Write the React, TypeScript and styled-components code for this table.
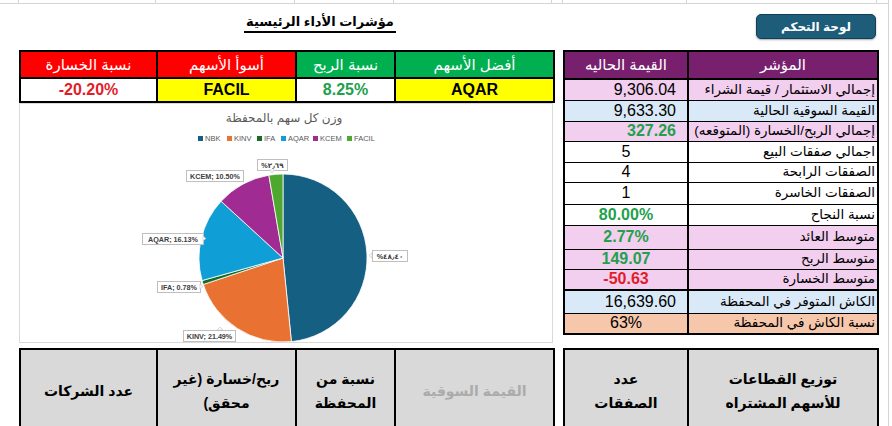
import React from "react";
import styled, { createGlobalStyle } from "styled-components";

const GlobalStyle = createGlobalStyle`
  html, body { margin: 0; padding: 0; background: #fff; }
  body { font-family: "Liberation Sans", "DejaVu Sans", Arial, sans-serif; color: #000; }
  *, *::before, *::after { box-sizing: border-box; }
`;

const Page = styled.div`
  width: 889px;
  height: 426px;
  overflow: hidden;
  border-right: 1px solid #d4d4d4;
`;

// faint spreadsheet grid lines along the top edge
const GridStrip = styled.div`
  display: grid;
  grid-template-columns: 19px 137px 139px 99px 158px 11px 124px 190px;
  height: 4px;
  border-bottom: 1px solid #d4d4d4;

  span {
    border-right: 1px solid #d4d4d4;
  }
`;

const Sheet = styled.div`
  display: grid;
  grid-template-columns: 534px 314px;
  grid-template-rows: 46px 298px 84px;
  column-gap: 10px;
  padding-left: 19px;
`;

const TitleArea = styled.div`
  display: flex;
  justify-content: center;
  align-items: flex-start;
  padding: 10px 0 0 68px;
`;

const Title = styled.h1`
  margin: 0;
  padding: 0 2px 1px;
  font-size: 13px;
  line-height: 16px;
  font-weight: bold;
  direction: rtl;
  border-bottom: 2px solid #000;
`;

const ButtonArea = styled.div`
  display: flex;
  justify-content: flex-end;
  align-items: flex-start;
  padding: 10px 1px 0 0;
`;

const DashButton = styled.button`
  width: 120px;
  height: 25px;
  padding: 0;
  background: #1d5d7a;
  border: 1px solid #123f55;
  border-radius: 5px;
  color: #fff;
  font: bold 12px "Liberation Sans", "DejaVu Sans", sans-serif;
  direction: rtl;
  box-shadow: 0 1px 2px rgba(0, 0, 0, 0.35);
`;

const LeftStack = styled.div`
  display: flex;
  flex-direction: column;
`;

const Table = styled.table<{ $w: number }>`
  width: ${p => p.$w}px;
  border-collapse: collapse;
  table-layout: fixed;
`;

const KpiHead = styled.th<{ $tone: "red" | "green" }>`
  height: 27px;
  padding: 0;
  border: 2px solid #000;
  background: ${p => (p.$tone === "red" ? "#ff0000" : "#00b050")};
  color: #fff;
  font-size: 15px;
  font-weight: normal;
  direction: rtl;
`;

const KpiValue = styled.td<{ $bg: string; $color: string }>`
  height: 24px;
  padding: 0;
  border: 2px solid #000;
  background: ${p => p.$bg};
  color: ${p => p.$color};
  text-align: center;
  font-size: 16px;
  font-weight: bold;
`;

const ChartBox = styled.div`
  width: 534px;
  height: 240px;
  border: 1px solid #d9d9d9;
  overflow: hidden;
  background: #fff;

  svg {
    display: block;
  }
`;

const IndHead = styled.th`
  height: 28px;
  padding: 0;
  border: 2px solid #000;
  background: #78206e;
  color: #fff;
  font-size: 15px;
  font-weight: normal;
  direction: rtl;
`;

const tones = {
  pink: "#f2ceef",
  blue: "#dae9f8",
  white: "#ffffff",
  peach: "#f7c7ac",
};

type Tone = keyof typeof tones;

const IndRow = styled.tr<{ $tone: Tone; $h: number; $thick?: boolean }>`
  height: ${p => p.$h}px;
  background: ${p => tones[p.$tone]};
  border-bottom: ${p => (p.$thick ? "2px" : "1px")} solid #000;
`;

const IndValue = styled.td<{ $align: "center" | "right"; $color?: string }>`
  padding: 0 ${p => (p.$align === "right" ? "11px" : "0")} 0 0;
  border-left: 2px solid #000;
  border-right: 2px solid #000;
  text-align: ${p => p.$align};
  font-size: 16px;
  line-height: 16px;
  font-weight: ${p => (p.$color ? "bold" : "normal")};
  color: ${p => p.$color || "#000"};
`;

const IndLabel = styled.td`
  padding: 0 2px 0 0;
  border-right: 2px solid #000;
  text-align: right;
  direction: rtl;
  font-size: 13.5px;
  line-height: 16px;
  white-space: nowrap;
  overflow: hidden;
`;

const BlockCell = styled.td<{ $faded?: boolean }>`
  height: 84px;
  padding: 0;
  border: 2px solid #000;
  background: #d9d9d9;
  text-align: center;
  vertical-align: middle;
  direction: rtl;
  font-size: 14px;
  line-height: 24px;
  font-weight: bold;
  color: ${p => (p.$faded ? "#ababab" : "#000")};
`;

const GREEN = "#22a04b";
const RED = "#e11d2a";

const slices = [
  { name: "NBK", value: 48.4, color: "#156082" },
  { name: "KINV", value: 21.49, color: "#e97132" },
  { name: "IFA", value: 0.78, color: "#196b24" },
  { name: "AQAR", value: 16.13, color: "#0f9ed5" },
  { name: "KCEM", value: 10.5, color: "#a02b93" },
  { name: "FACIL", value: 2.69, color: "#4ea72e" },
];

const legendX = [178, 207, 237, 261, 293, 327];

const callouts = [
  { text: "%٤٨٫٤٠", x: 352, y: 146, w: 35, tip: "left" },
  { text: "KINV; 21.49%", x: 163, y: 226, w: 52, tip: "top" },
  { text: "IFA; 0.78%", x: 137, y: 177, w: 43, tip: "right" },
  { text: "AQAR; 16.13%", x: 122, y: 129, w: 61, tip: "right" },
  { text: "KCEM; 10.50%", x: 166, y: 66, w: 57, tip: "none" },
  { text: "%٢٫٦٩", x: 237, y: 55, w: 30, tip: "bottom" },
];

const CX = 263;
const CY = 154;
const R = 84;

const pt = (a: number) => [CX + R * Math.sin(a), CY - R * Math.cos(a)];

function slicePath(a0: number, a1: number) {
  const [x0, y0] = pt(a0);
  const [x1, y1] = pt(a1);
  const large = a1 - a0 > Math.PI ? 1 : 0;
  return `M${CX},${CY} L${x0.toFixed(2)},${y0.toFixed(2)} A${R},${R} 0 ${large} 1 ${x1.toFixed(2)},${y1.toFixed(2)} Z`;
}

function tipPoints(c: { x: number; y: number; w: number; tip: string }) {
  const h = 11;
  const mx = c.x + c.w / 2;
  const my = c.y + h / 2;
  if (c.tip === "left") return `${c.x},${my - 2.5} ${c.x - 3},${my} ${c.x},${my + 2.5}`;
  if (c.tip === "right") return `${c.x + c.w},${my - 2.5} ${c.x + c.w + 3},${my} ${c.x + c.w},${my + 2.5}`;
  if (c.tip === "bottom") return `${mx - 2.5},${c.y + h} ${mx},${c.y + h + 3} ${mx + 2.5},${c.y + h}`;
  if (c.tip === "top") return `${mx + 8},${c.y} ${mx + 11},${c.y - 3} ${mx + 14},${c.y}`;
  return "";
}

function WeightChart() {
  const total = slices.reduce((s, d) => s + d.value, 0);
  let acc = 0;
  const paths = slices.map(d => {
    const a0 = (acc / total) * Math.PI * 2;
    acc += d.value;
    const a1 = (acc / total) * Math.PI * 2;
    return { ...d, d: slicePath(a0, a1) };
  });
  const font = '"Liberation Sans", "DejaVu Sans", sans-serif';
  return (
    <svg width={532} height={238} viewBox="0 0 532 238">
      <text x={264} y={18} textAnchor="middle" fontSize={12} fill="#595959" fontFamily={font} direction="rtl">
        وزن كل سهم بالمحفظة
      </text>
      {slices.map((d, i) => (
        <g key={d.name}>
          <rect x={legendX[i]} y={32} width={5} height={5} fill={d.color} />
          <text x={legendX[i] + 7} y={37} fontSize={7.5} fill="#595959" fontFamily={font}>
            {d.name}
          </text>
        </g>
      ))}
      {paths.map(p => (
        <path key={p.name} d={p.d} fill={p.color} stroke="#fff" strokeWidth={0.8} />
      ))}
      {callouts.map(c => (
        <g key={c.text}>
          <rect x={c.x + 0.5} y={c.y + 0.5} width={c.w} height={11} fill="#fff" stroke="#bfbfbf" strokeWidth={1} />
          {c.tip !== "none" && <polygon points={tipPoints(c)} fill="#fff" stroke="#bfbfbf" strokeWidth={0.6} />}
          <text
            x={c.x + c.w / 2 + 0.5}
            y={c.y + 8.8}
            textAnchor="middle"
            fontSize={7.2}
            fontWeight="bold"
            fill="#404040"
            fontFamily={font}
          >
            {c.text}
          </text>
        </g>
      ))}
    </svg>
  );
}

const indicators: {
  label: string;
  value: string;
  tone: Tone;
  h: number;
  align: "center" | "right";
  color?: string;
  thick?: boolean;
}[] = [
  { label: "إجمالي الاستثمار / قيمة الشراء", value: "9,306.04", tone: "pink", h: 21, align: "right" },
  { label: "القيمة السوقية الحالية", value: "9,633.30", tone: "blue", h: 21, align: "right" },
  { label: "إجمالي الربح/الخسارة (المتوقعه)", value: "327.26", tone: "pink", h: 20, align: "right", color: GREEN },
  { label: "اجمالي صفقات البيع", value: "5", tone: "white", h: 21, align: "center" },
  { label: "الصفقات الرابحة", value: "4", tone: "white", h: 20, align: "center" },
  { label: "الصفقات الخاسرة", value: "1", tone: "white", h: 22, align: "center" },
  { label: "نسبة النجاح", value: "80.00%", tone: "white", h: 21, align: "center", color: GREEN },
  { label: "متوسط العائد", value: "2.77%", tone: "pink", h: 24, align: "center", color: GREEN },
  { label: "متوسط الربح", value: "149.07", tone: "pink", h: 20, align: "center", color: GREEN },
  { label: "متوسط الخسارة", value: "-50.63", tone: "pink", h: 21, align: "center", color: RED, thick: true },
  { label: "الكاش المتوفر في المحفظة", value: "16,639.60", tone: "blue", h: 23, align: "right" },
  { label: "نسبة الكاش في المحفظة", value: "63%", tone: "peach", h: 21, align: "center" },
];

export default function App() {
  return (
    <Page>
      <GlobalStyle />
      <GridStrip>
        {Array.from({ length: 8 }).map((_, i) => (
          <span key={i} />
        ))}
      </GridStrip>
      <Sheet>
        <TitleArea>
          <Title>مؤشرات الأداء الرئيسية</Title>
        </TitleArea>
        <ButtonArea>
          <DashButton>لوحة التحكم</DashButton>
        </ButtonArea>

        <LeftStack>
          <Table $w={534}>
            <colgroup>
              <col style={{ width: 137 }} />
              <col style={{ width: 139 }} />
              <col style={{ width: 99 }} />
              <col style={{ width: 159 }} />
            </colgroup>
            <thead>
              <tr>
                <KpiHead $tone="red">نسبة الخسارة</KpiHead>
                <KpiHead $tone="red">أسوأ الأسهم</KpiHead>
                <KpiHead $tone="green">نسبة الربح</KpiHead>
                <KpiHead $tone="green">أفضل الأسهم</KpiHead>
              </tr>
            </thead>
            <tbody>
              <tr>
                <KpiValue $bg="#fff" $color={RED}>-20.20%</KpiValue>
                <KpiValue $bg="#ffff00" $color="#000">FACIL</KpiValue>
                <KpiValue $bg="#fff" $color={GREEN}>8.25%</KpiValue>
                <KpiValue $bg="#ffff00" $color="#000">AQAR</KpiValue>
              </tr>
            </tbody>
          </Table>
          <ChartBox>
            <WeightChart />
          </ChartBox>
        </LeftStack>

        <div>
          <Table $w={314}>
            <colgroup>
              <col style={{ width: 124 }} />
              <col style={{ width: 190 }} />
            </colgroup>
            <thead>
              <tr>
                <IndHead>القيمة الحاليه</IndHead>
                <IndHead>المؤشر</IndHead>
              </tr>
            </thead>
            <tbody style={{ border: "2px solid #000" }}>
              {indicators.map(r => (
                <IndRow key={r.label} $tone={r.tone} $h={r.h} $thick={r.thick}>
                  <IndValue $align={r.align} $color={r.color}>
                    {r.value}
                  </IndValue>
                  <IndLabel>{r.label}</IndLabel>
                </IndRow>
              ))}
            </tbody>
          </Table>
        </div>

        <Table $w={534}>
          <colgroup>
            <col style={{ width: 137 }} />
            <col style={{ width: 139 }} />
            <col style={{ width: 99 }} />
            <col style={{ width: 159 }} />
          </colgroup>
          <tbody>
            <tr>
              <BlockCell>عدد الشركات</BlockCell>
              <BlockCell>
                ربح/خسارة (غير
                <br />
                محقق)
              </BlockCell>
              <BlockCell>
                نسبة من
                <br />
                المحفظة
              </BlockCell>
              <BlockCell $faded>القيمة السوقية</BlockCell>
            </tr>
          </tbody>
        </Table>

        <Table $w={314}>
          <colgroup>
            <col style={{ width: 124 }} />
            <col style={{ width: 190 }} />
          </colgroup>
          <tbody>
            <tr>
              <BlockCell>
                عدد
                <br />
                الصفقات
              </BlockCell>
              <BlockCell>
                توزيع القطاعات
                <br />
                للأسهم المشتراه
              </BlockCell>
            </tr>
          </tbody>
        </Table>
      </Sheet>
    </Page>
  );
}
